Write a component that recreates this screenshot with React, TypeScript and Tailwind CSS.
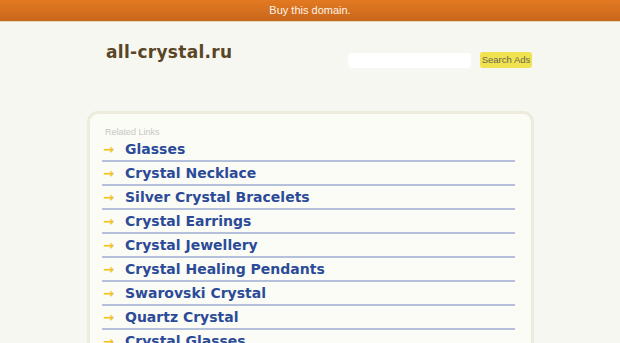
import React from "react";

const links = [
  "Glasses",
  "Crystal Necklace",
  "Silver Crystal Bracelets",
  "Crystal Earrings",
  "Crystal Jewellery",
  "Crystal Healing Pendants",
  "Swarovski Crystal",
  "Quartz Crystal",
  "Crystal Glasses",
];

export default function App() {
  return (
    <div className="w-[620px] h-[343px] overflow-hidden bg-[#f7f7f2] font-['DejaVu_Sans',sans-serif]">
      {/* top banner */}
      <div className="h-[22px] bg-gradient-to-b from-[#e37a22] to-[#c8661c] border-b border-[#e9d6c0] flex items-center justify-center">
        <span className="text-[#fdf3e8] text-[11px] font-['Liberation_Sans',sans-serif] font-medium">
          Buy this domain.
        </span>
      </div>

      {/* header */}
      <div className="flex items-start pl-[106px] pt-[19px] h-[89px]">
        <h1 className="text-[17px] font-bold text-[#5a4525] leading-[22px] tracking-[0.3px]">
          all-crystal.ru
        </h1>
        <div className="ml-auto mr-[88px] flex items-center gap-[9px] mt-[11px]">
          <div className="w-[123px] h-[15px] bg-white rounded-[4px]" />
          <button className="w-[52px] h-[16px] bg-[#f1e34f] rounded-[3px] text-[9.5px] text-[#666650] font-['Liberation_Sans',sans-serif] leading-none">
            Search Ads
          </button>
        </div>
      </div>

      {/* related links panel */}
      <div className="ml-[87px] w-[447px] h-[260px] border-[3px] border-[#ecebdc] rounded-[11px] bg-[#fcfcf7] px-[12px] pt-[12px]">
        <div className="pl-[3px] text-[9px] text-[#c6c6c0] font-['Liberation_Sans',sans-serif] leading-[12px]">
          Related Links
        </div>
        <ul className="w-[413px]">
          {links.map((l) => (
            <li
              key={l}
              className="h-[24px] border-b-2 border-[#b5c0dc] flex items-center"
            >
              <span className="w-[23px] pl-[1px] text-[#f2c21e] text-[13px] font-bold leading-none">
                →
              </span>
              <a className="text-[14px] font-bold text-[#2b4b98] leading-none">
                {l}
              </a>
            </li>
          ))}
        </ul>
      </div>
    </div>
  );
}
